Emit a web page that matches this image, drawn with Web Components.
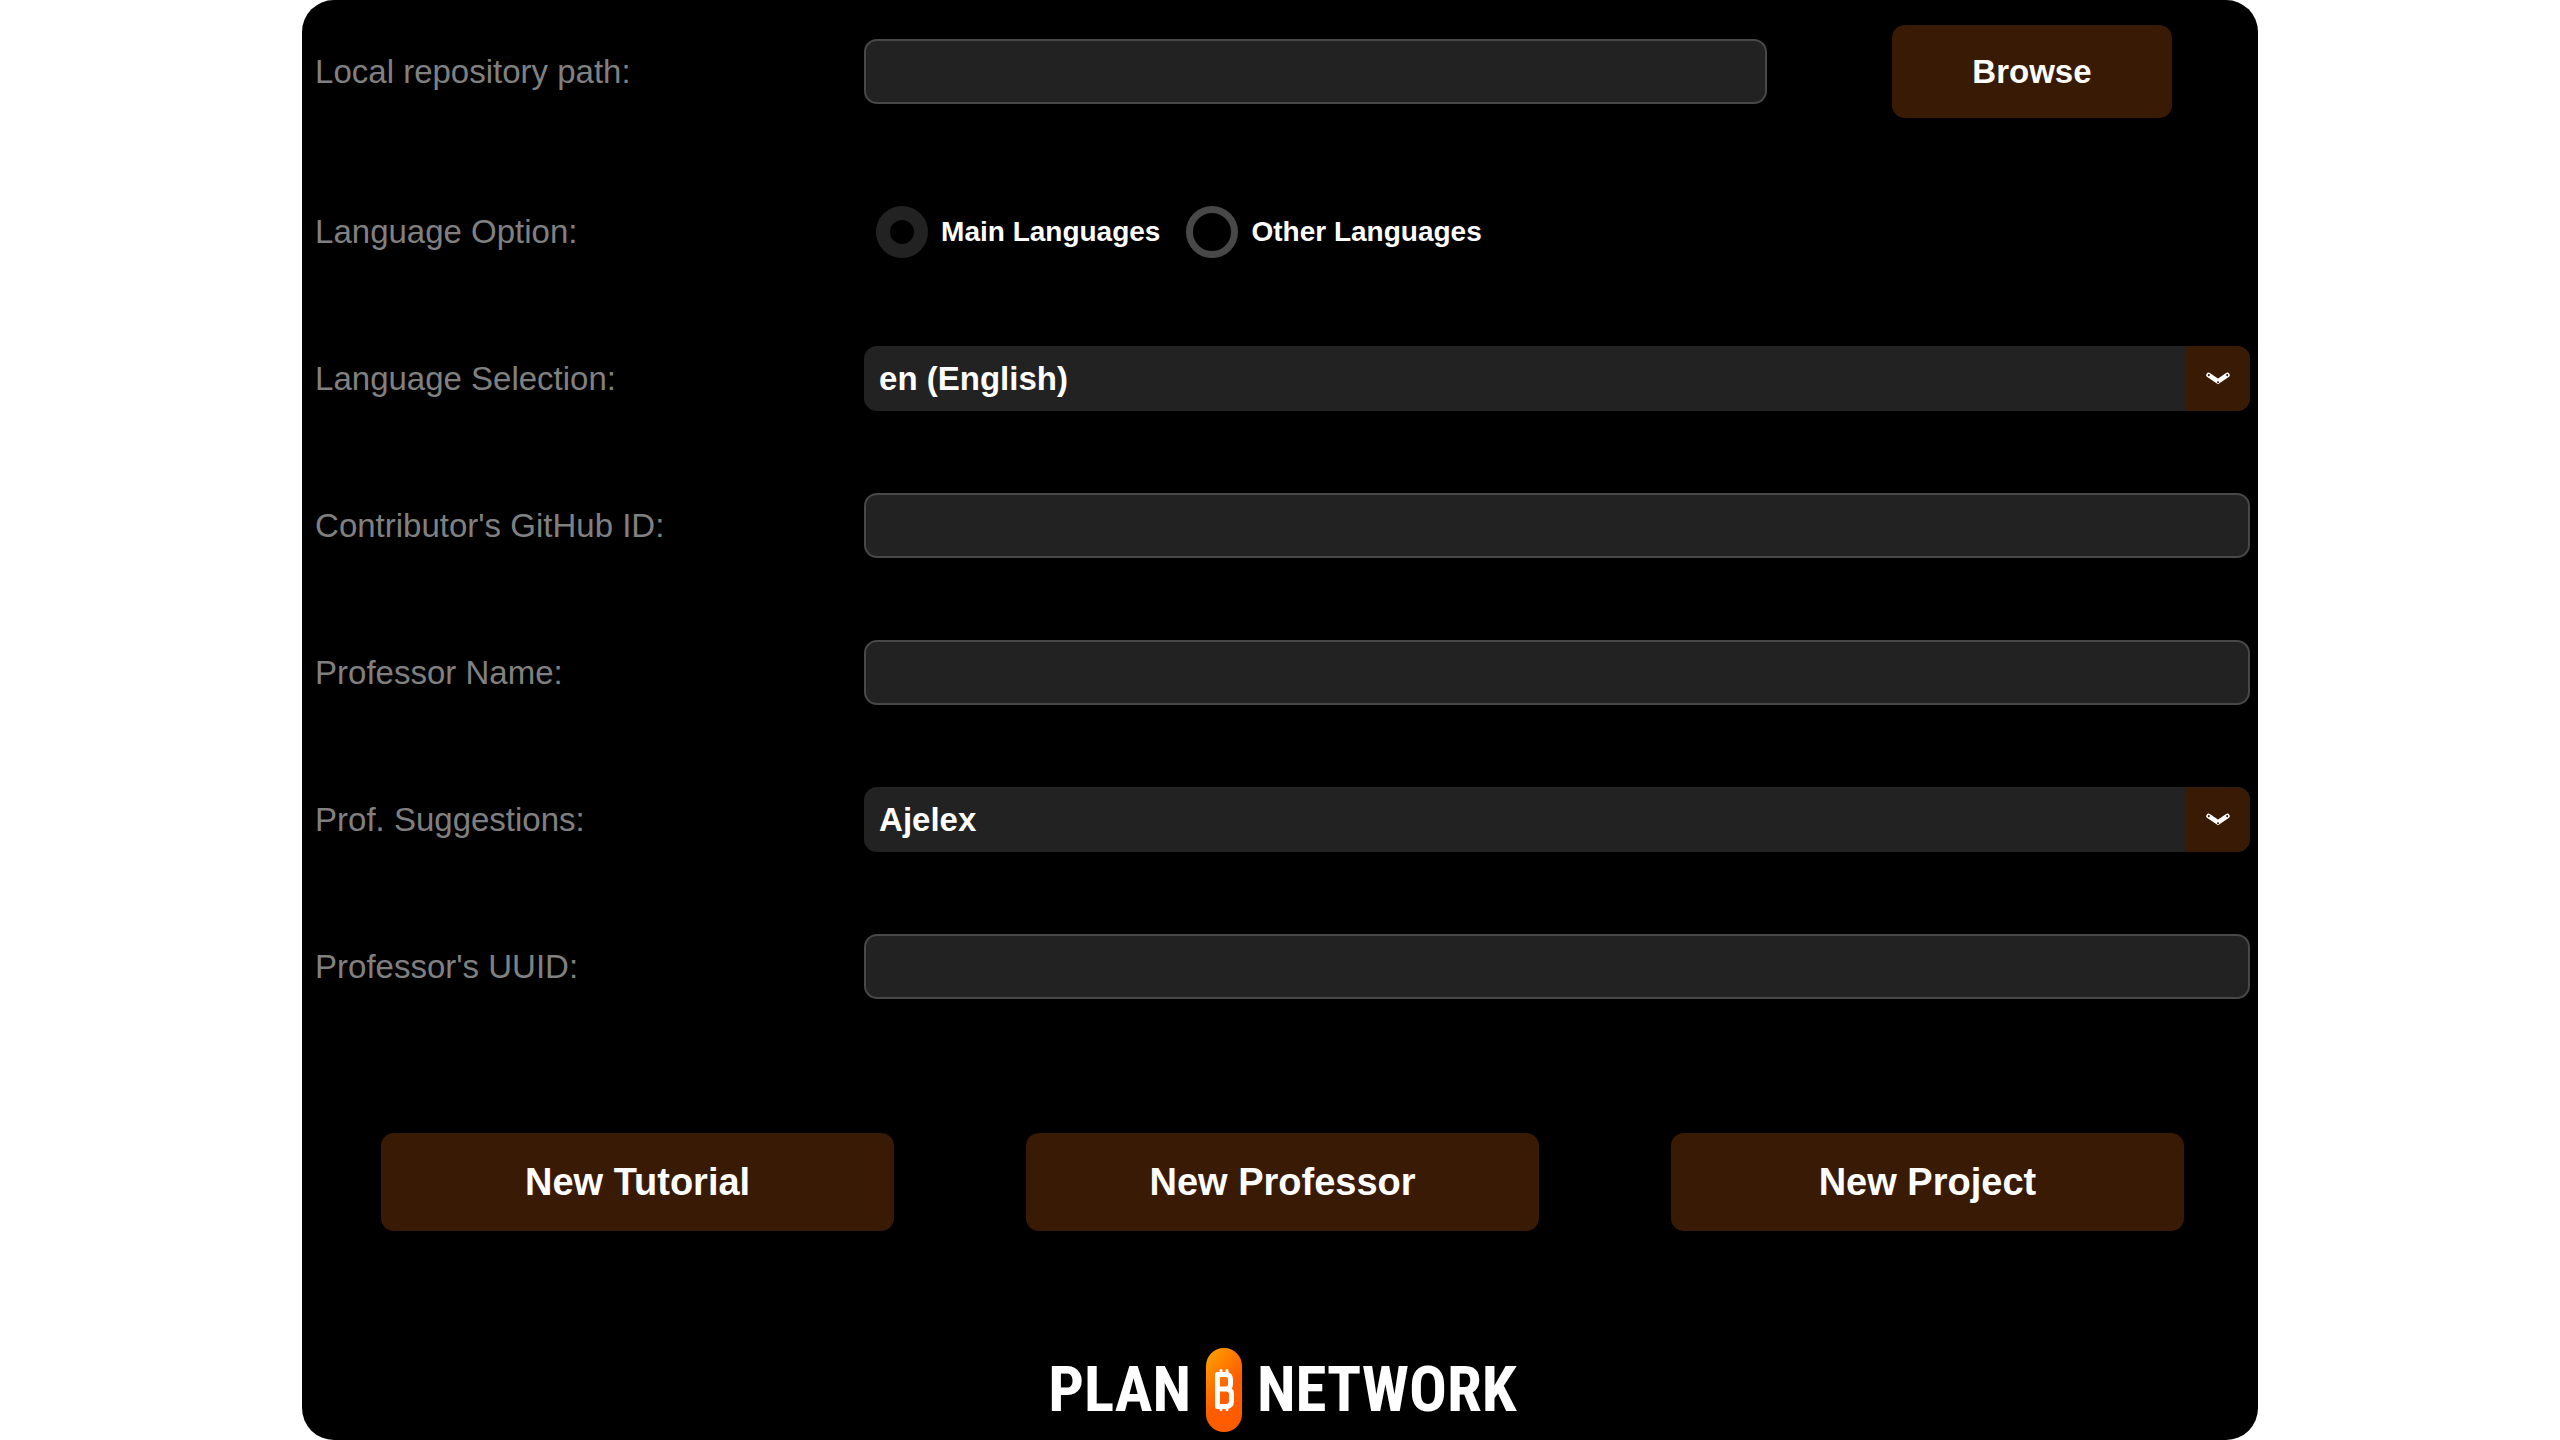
<!DOCTYPE html>
<html lang="en">
<head>
<meta charset="utf-8">
<title>Plan B Network</title>
<style>
  body { margin: 0; background: #fff; font-family: "Liberation Sans", Arial, sans-serif; }
</style>
</head>
<body>
<pb-app></pb-app>

<template id="pb-app">
  <style>
    :host {
      display: block; box-sizing: border-box; width: 76.4%; margin: 0 auto;
      padding: 25px 8px 9px 13px; background: #000; border-radius: 32px;
      --accent: #381a05; --field: #222; --line: #484848; --muted: #808080;
    }
    form { display: flex; flex-direction: column; margin: 0; }
    .top { display: flex; flex-direction: column; gap: 88px; margin-bottom: 88px; }
    .fields { display: flex; flex-direction: column; gap: 82px; }
    .path { display: grid; grid-template-columns: 1fr auto; gap: 125px; align-items: center; padding-right: 78px; }
    .actions { display: grid; grid-template-columns: repeat(3, 1fr); justify-items: center; margin-top: 134px; }
    footer { display: flex; justify-content: center; margin-top: 117px; }
  </style>
  <form>
    <div class="top">
      <div class="path">
        <pb-text-field label="Local repository path:"></pb-text-field>
        <pb-button size="small">Browse</pb-button>
      </div>
      <pb-radio-group label="Language Option:" options="Main Languages|Other Languages"></pb-radio-group>
    </div>
    <div class="fields">
      <pb-select-field label="Language Selection:" value="en (English)"></pb-select-field>
      <pb-text-field label="Contributor's GitHub ID:"></pb-text-field>
      <pb-text-field label="Professor Name:"></pb-text-field>
      <pb-select-field label="Prof. Suggestions:" value="Ajelex"></pb-select-field>
      <pb-text-field label="Professor's UUID:"></pb-text-field>
    </div>
    <div class="actions">
      <pb-button>New Tutorial</pb-button>
      <pb-button>New Professor</pb-button>
      <pb-button>New Project</pb-button>
    </div>
  </form>
  <footer><pb-logo></pb-logo></footer>
</template>

<template id="pb-button">
  <style>
    :host { display: block; }
    button {
      display: block; width: 513px; height: 98px; padding: 0; border: 0; border-radius: 13px;
      background: var(--accent); color: #fff; font: bold 38px/44px "Liberation Sans", Arial, sans-serif; cursor: pointer;
    }
    :host([size="small"]) button { width: 280px; height: 93px; font-size: 33px; }
  </style>
  <button type="button"><slot></slot></button>
</template>

<template id="pb-logo">
  <style>
    :host { display: flex; align-items: center; gap: 15px; color: #fff; height: 83px;
      font: bold 63px/83px "Liberation Sans Narrow", "Roboto Condensed", "DejaVu Sans Condensed", sans-serif; }
    svg { display: block; }
  </style>
  <span>PLAN</span>
  <svg width="36" height="84" viewBox="0 0 36 84" role="img" aria-label="Bitcoin">
    <defs>
      <linearGradient id="g" x1="0" y1="0" x2="0.5" y2="1">
        <stop offset="0" stop-color="#ffa600"></stop>
        <stop offset="0.65" stop-color="#ff5c00"></stop>
        <stop offset="1" stop-color="#ff5c00"></stop>
      </linearGradient>
    </defs>
    <rect width="36" height="84" rx="18" fill="url(#g)"></rect>
    <g fill="none" stroke="#fff" stroke-linejoin="round" stroke-linecap="round">
      <path d="M11.500 26.500H19.500Q24.500 26.500 24.500 31.500V36Q24.500 41 19.500 41Q25.500 41 25.500 46V53Q25.500 58.500 19.500 58.500H11.500ZM11.500 41H19.500" stroke-width="5"></path>
      <path d="M15 22.500V26M21 22.500V26M15 59V61.500M21 59V61.500" stroke-width="3"></path>
    </g>
  </svg>
  <span>NETWORK</span>
</template>

<script>
  const escape = s => s.replace(/&/g, "&amp;").replace(/</g, "&lt;").replace(/"/g, "&quot;");

  const rowStyle = `
    :host { display: block; }
    .row { display: grid; grid-template-columns: 549px minmax(0, 1fr); align-items: center; margin: 0; padding: 0; border: 0; }
    .label { color: var(--muted); font-size: 33px; line-height: 40px; white-space: nowrap; }
  `;

  class TemplateElement extends HTMLElement {
    connectedCallback() {
      if (this.shadowRoot) return;
      this.attachShadow({ mode: "open" })
        .append(document.getElementById(this.localName).content.cloneNode(true));
    }
  }

  class PbTextField extends HTMLElement {
    connectedCallback() {
      if (this.shadowRoot) return;
      this.attachShadow({ mode: "open" }).innerHTML = `
        <style>${rowStyle}
          input { box-sizing: border-box; width: 100%; height: 65px; margin: 0; padding: 0 14px;
            background: var(--field); border: 2px solid var(--line); border-radius: 13px;
            color: #fff; font: bold 33px/40px "Liberation Sans", Arial, sans-serif; }
        </style>
        <div class="row">
          <label class="label" for="input">${escape(this.getAttribute("label"))}</label>
          <input id="input" type="text">
        </div>`;
    }
  }

  class PbSelectField extends HTMLElement {
    connectedCallback() {
      if (this.shadowRoot) return;
      this.attachShadow({ mode: "open" }).innerHTML = `
        <style>${rowStyle}
          .box { display: grid; grid-template-columns: minmax(0, 1fr) 64px; height: 65px; border-radius: 13px;
            overflow: hidden; background: var(--field); }
          select { grid-area: 1 / 1 / 2 / 3; appearance: none; width: 100%; height: 65px; margin: 0; padding: 0 80px 0 15px;
            border: 0; background: transparent; color: #fff; font: bold 33px/40px "Liberation Sans", Arial, sans-serif; }
          .arrow { grid-area: 1 / 2; display: grid; place-items: center; background: var(--accent); pointer-events: none; }
        </style>
        <div class="row">
          <label class="label" for="select">${escape(this.getAttribute("label"))}</label>
          <div class="box">
            <select id="select"><option>${escape(this.getAttribute("value"))}</option></select>
            <span class="arrow" aria-hidden="true">
              <svg width="24" height="13" viewBox="0 0 24 13" fill="none" stroke-linecap="round">
                <path d="M2.600 3L12 9.500L21.400 3" stroke="#fff" stroke-width="4.600"></path>
                <path d="M2.800 3.100V3.200M21.200 3.100V3.200M12 10.200V10.300" stroke="#381a05" stroke-width="2"></path>
              </svg>
            </span>
          </div>
        </div>`;
    }
  }

  class PbRadioGroup extends HTMLElement {
    connectedCallback() {
      if (this.shadowRoot) return;
      const options = this.getAttribute("options").split("|").map((text, i) => `
        <label class="option"><input type="radio" name="option" ${i ? "" : "checked"}><span>${escape(text)}</span></label>`).join("");
      this.attachShadow({ mode: "open" }).innerHTML = `
        <style>${rowStyle}
          .options { display: flex; gap: 26px; padding-left: 12px; }
          .option { display: flex; align-items: center; gap: 13px; color: #fff; font-weight: bold; font-size: 28px; line-height: 32px; white-space: nowrap; }
          input { appearance: none; box-sizing: border-box; flex: none; width: 52px; height: 52px; margin: 0;
            border: 7px solid var(--line); border-radius: 50%; background: transparent; }
          input:checked { border: 14px solid var(--field); }
        </style>
        <div class="row" role="radiogroup" aria-labelledby="title">
          <span class="label" id="title">${escape(this.getAttribute("label"))}</span>
          <div class="options">${options}</div>
        </div>`;
    }
  }

  customElements.define("pb-text-field", PbTextField);
  customElements.define("pb-select-field", PbSelectField);
  customElements.define("pb-radio-group", PbRadioGroup);
  customElements.define("pb-button", class extends TemplateElement {});
  customElements.define("pb-logo", class extends TemplateElement {});
  customElements.define("pb-app", class extends TemplateElement {});
</script>
</body>
</html>
